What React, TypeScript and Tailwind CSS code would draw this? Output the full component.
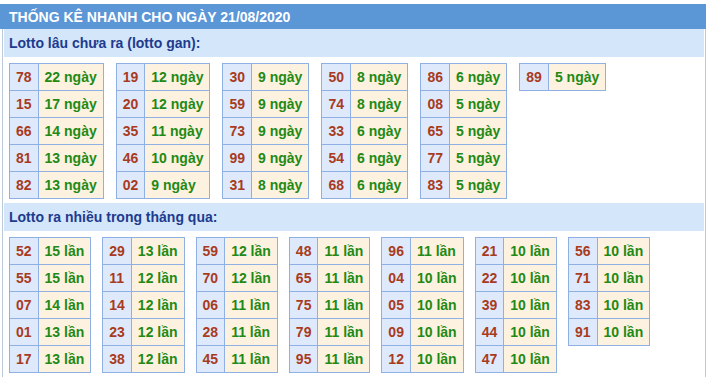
import React from 'react';

type Cell = [string, number];

const ganTables: Cell[][] = [
  [['78', 22], ['15', 17], ['66', 14], ['81', 13], ['82', 13]],
  [['19', 12], ['20', 12], ['35', 11], ['46', 10], ['02', 9]],
  [['30', 9], ['59', 9], ['73', 9], ['99', 9], ['31', 8]],
  [['50', 8], ['74', 8], ['33', 6], ['54', 6], ['68', 6]],
  [['86', 6], ['08', 5], ['65', 5], ['77', 5], ['83', 5]],
  [['89', 5]],
];

const nhieuTables: Cell[][] = [
  [['52', 15], ['55', 15], ['07', 14], ['01', 13], ['17', 13]],
  [['29', 13], ['11', 12], ['14', 12], ['23', 12], ['38', 12]],
  [['59', 12], ['70', 12], ['06', 11], ['28', 11], ['45', 11]],
  [['48', 11], ['65', 11], ['75', 11], ['79', 11], ['95', 11]],
  [['96', 11], ['04', 10], ['05', 10], ['09', 10], ['12', 10]],
  [['21', 10], ['22', 10], ['39', 10], ['44', 10], ['47', 10]],
  [['56', 10], ['71', 10], ['83', 10], ['91', 10]],
];

function LottoTable({ rows, unit }: { rows: Cell[]; unit: string }) {
  return (
    <table className="border-collapse self-start">
      <tbody>
        {rows.map(([num, count]) => (
          <tr key={num} className="h-[27px]">
            <td className="border border-[#8fb0e2] bg-[#deeafb] px-[6px] py-0 text-[#a83b1e]">{num}</td>
            <td className="border border-[#8fb0e2] bg-[#fdf1df] px-[6px] py-0 text-[#1f8a16] whitespace-nowrap">
              {count} {unit}
            </td>
          </tr>
        ))}
      </tbody>
    </table>
  );
}

function Section({ title, tables, unit, tight }: { title: string; tables: Cell[][]; unit: string; tight?: boolean }) {
  return (
    <div>
      <div className="mx-[1px] flex h-[28px] items-center bg-[#d4e6f9] pl-[5px] text-[#1d3b8f]">{title}</div>
      <div
        className={`flex flex-wrap items-start pl-[6px] pt-[6px] pb-[4px] ${tight ? 'gap-[11px]' : 'gap-3'}`}
      >
        {tables.map((rows, i) => (
          <LottoTable key={i} rows={rows} unit={unit} />
        ))}
      </div>
    </div>
  );
}

export default function App() {
  return (
    <div className="w-[710px] h-[377px] overflow-hidden bg-white pt-[4px] font-['Liberation_Sans',Arial,sans-serif] text-[14px] font-bold leading-4">
      <div className="flex h-[25px] w-[706px] items-center bg-[#5b96d7] pl-[9px] text-white">
        THỐNG KÊ NHANH CHO NGÀY 21/08/2020
      </div>
      <div className="ml-[2px] w-[704px] border-x border-[#bccbdc] pb-[10px]">
        <Section title="Lotto lâu chưa ra (lotto gan):" tables={ganTables} unit="ngày" />
        <Section title="Lotto ra nhiều trong tháng qua:" tables={nhieuTables} unit="lần" tight />
      </div>
    </div>
  );
}
